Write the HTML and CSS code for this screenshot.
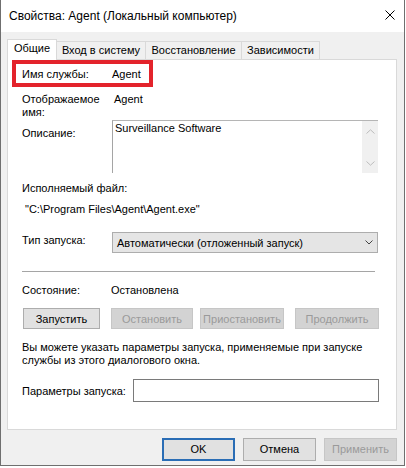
FILE: index.html
```html
<!DOCTYPE html>
<html lang="ru">
<head>
<meta charset="utf-8">
<title>Свойства: Agent</title>
<link rel="stylesheet" href="styles.css">
</head>
<body>
<div class="window">
  <div class="titlebar">
    <span class="title">Свойства: Agent (Локальный компьютер)</span>
    <svg class="close" width="10" height="10" viewBox="0 0 10 10"><path d="M0.5 0.5 L9.5 9.5 M9.5 0.5 L0.5 9.5" stroke="#000" stroke-width="1" fill="none"/></svg>
  </div>
  <div class="body">
    <div class="tabs">
      <div class="tab active">Общие</div>
      <div class="tab t2">Вход в систему</div>
      <div class="tab t3">Восстановление</div>
      <div class="tab t4">Зависимости</div>
    </div>
    <div class="panel">
      <div class="highlight"></div>
      <div class="row r1"><span class="label">Имя службы:</span><span class="value">Agent</span></div>
      <div class="row r2"><span class="label">Отображаемое<br>имя:</span><span class="value v2">Agent</span></div>
      <div class="row r3">
        <span class="label">Описание:</span>
        <div class="desc">
          <div class="desc-text">Surveillance Software</div>
          <div class="scroll">
            <svg width="9" height="5" viewBox="0 0 9 5"><path d="M0.5 4.5 L4.5 0.8 L8.5 4.5" stroke="#bdbdbd" fill="none"/></svg>
            <svg width="9" height="5" viewBox="0 0 9 5"><path d="M0.5 0.5 L4.5 4.2 L8.5 0.5" stroke="#bdbdbd" fill="none"/></svg>
          </div>
        </div>
      </div>
      <div class="plain r4">Исполняемый файл:</div>
      <div class="plain r5">"C:\Program Files\Agent\Agent.exe"</div>
      <div class="row r6">
        <span class="label">Тип запуска:</span>
        <div class="select"><span>Автоматически (отложенный запуск)</span>
          <svg class="chev" width="8" height="5" viewBox="0 0 8 5"><path d="M0.5 0.5 L4 4 L7.5 0.5" stroke="#444" fill="none"/></svg>
        </div>
      </div>
      <div class="sep"></div>
      <div class="row r8"><span class="label">Состояние:</span><span class="value v8">Остановлена</span></div>
      <div class="row r9">
        <div class="btn b1">Запустить</div>
        <div class="btn dis b2">Остановить</div>
        <div class="btn dis b3">Приостановить</div>
        <div class="btn dis b4">Продолжить</div>
      </div>
      <div class="plain r10">Вы можете указать параметры запуска, применяемые при запуске<br>службы из этого диалогового окна.</div>
      <div class="row r11">
        <span class="label l11">Параметры запуска:</span>
        <div class="input"></div>
      </div>
    </div>
    <div class="footer">
      <div class="fbtn ok">OK</div>
      <div class="fbtn">Отмена</div>
      <div class="fbtn dis">Применить</div>
    </div>
  </div>
</div>
</body>
</html>
```
FILE: styles.css
```css
body {
  margin: 0;
  background: #fff;
  font-family: "Liberation Sans", Arial, sans-serif;
  font-size: 11px;
  color: #000;
}
.window {
  width: 405px;
  height: 466px;
  box-sizing: border-box;
  border: 1px solid #6f6f6f;
  border-top: none;
  background: #f0f0f0;
  display: flex;
  flex-direction: column;
}
.titlebar {
  height: 32px;
  flex: none;
  background: #fff;
  display: flex;
  align-items: center;
  justify-content: space-between;
  padding: 0 9px 0 8px;
  font-size: 12px;
  line-height: 15px;
}
.close { display: block; margin-top: -2px; }
.body {
  flex: 1;
  padding: 7px 7px 0 6px;
  display: flex;
  flex-direction: column;
}
.tabs {
  display: flex;
  align-items: flex-end;
  height: 20px;
}
.tab {
  height: 18px;
  box-sizing: border-box;
  border: 1px solid #d9d9d9;
  border-bottom: none;
  text-align: center;
  line-height: 17px;
  white-space: nowrap;
}
.tab.active {
  width: 50px;
  height: 21px;
  line-height: 16px;
  background: #fff;
  position: relative;
  z-index: 1;
  margin-bottom: -1px;
}
.t2 { width: 89px; border-left: none; }
.t3 { width: 97px; margin-left: -1px; }
.t4 { width: 79px; margin-left: -1px; }
.panel {
  height: 371px;
  box-sizing: border-box;
  border: 1px solid #d9d9d9;
  background: #fff;
  position: relative;
  padding: 0 14px;
  flex: none;
}
.highlight {
  position: absolute;
  left: 4px;
  top: 0;
  width: 141px;
  height: 27px;
  box-sizing: border-box;
  border: 4px solid #e3232b;
}
.row { display: flex; white-space: nowrap; }
.label { width: 90px; flex: none; }
.r1 { margin-top: 7px; line-height: 15px; }
.r2 { margin-top: 11px; line-height: 13px; }
.v2 { margin-left: 2px; }
.r3 { margin-top: 1px; }
.r3 .label { margin-top: 6px; line-height: 15px; }
.desc {
  width: 266px;
  height: 53px;
  box-sizing: border-box;
  border-left: 1px solid #a5a5a5;
  border-top: 1px solid #b5b5b5;
  display: flex;
}
.desc-text {
  flex: 1;
  padding: 1px 2px 0;
  line-height: 13px;
}
.scroll {
  width: 16px;
  background: #f0f0f0;
  display: flex;
  flex-direction: column;
  justify-content: space-between;
  align-items: center;
  padding: 8px 0 7px;
  box-sizing: border-box;
}
.scroll svg { display: block; }
.plain { line-height: 15px; white-space: nowrap; }
.r4 { margin-top: 8px; }
.r5 { margin-top: 6px; padding-left: 3px; }
.r6 { margin-top: 15px; line-height: 15px; }
.r6 .label { margin-top: 1px; }
.select {
  width: 266px;
  height: 21px;
  box-sizing: border-box;
  border: 1px solid #adadad;
  background: #e5e5e5;
  line-height: 18px;
  padding: 1px 4px 0 4px;
  display: flex;
  align-items: center;
  justify-content: space-between;
}
.chev { display: block; margin-top: -1px; }
.sep {
  margin-top: 18px;
  width: 353px;
  height: 1px;
  background: #a5a5a5;
}
.r8 { margin-top: 11px; line-height: 15px; }
.v8 { margin-left: -1px; }
.r9 { margin-top: 10px; }
.btn {
  height: 21px;
  box-sizing: border-box;
  border: 1px solid #adadad;
  background: #e1e1e1;
  line-height: 20px;
  text-align: center;
  white-space: nowrap;
}
.btn.dis, .fbtn.dis {
  background: #d3d3d3;
  border-color: #c6c6c6;
  color: #9a9a9a;
}
.b1 { width: 77px; margin-left: 1px; }
.b2 { width: 82px; margin-left: 11px; }
.b3 { width: 84px; margin-left: 7px; }
.b4 { width: 84px; margin-left: 11px; }
.r10 { margin-top: 12px; line-height: 13px; }
.r11 { margin-top: 12px; line-height: 15px; }
.l11 { width: 111px; margin-top: 5px; }
.input {
  width: 246px;
  height: 23px;
  box-sizing: border-box;
  border: 1px solid #7a7a7a;
  background: #fff;
}
.footer {
  margin-top: 8px;
  display: flex;
  justify-content: flex-end;
  gap: 8px;
}
.fbtn {
  width: 73px;
  height: 23px;
  box-sizing: border-box;
  border: 1px solid #adadad;
  background: #e1e1e1;
  line-height: 21px;
  text-align: center;
}
.fbtn.ok {
  border: 2px solid #2a6db5;
  line-height: 19px;
}
```
